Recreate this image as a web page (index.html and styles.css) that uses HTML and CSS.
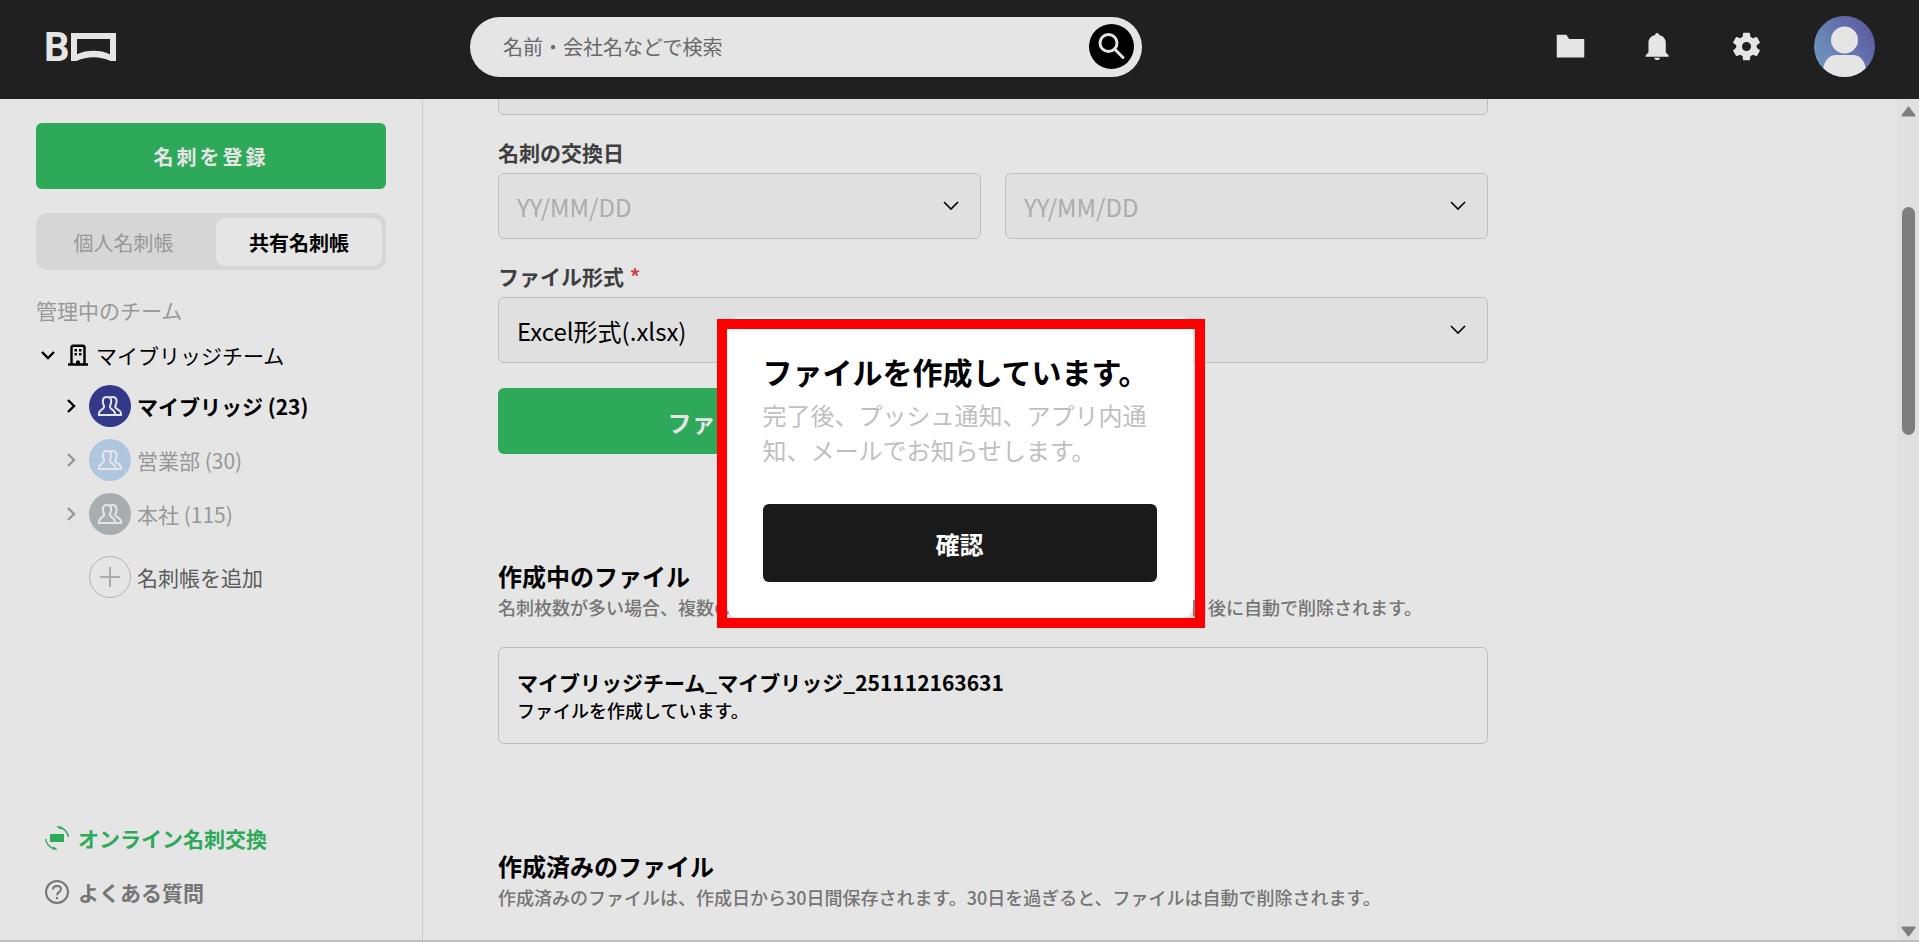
FILE: index.html
```html
<!DOCTYPE html>
<html lang="ja">
<head>
    <meta charset="UTF-8">
    <meta name="viewport" content="width=device-width, initial-scale=1.0">
    <title>マイブリッジ</title>
    <link rel="stylesheet" href="styles.css">
</head>
<body>
    <!-- shared icon shapes -->
    <svg class="symbols" aria-hidden="true">
        <symbol id="icon-people" viewBox="0 0 24 20">
            <path d="M1 19v-1.500c0-1.200.7-2 1.700-2.900l2.600-2.400c1.100-1 1.200-1.800.5-3C5 8 4.800 6.600 4.800 5.200 4.800 2.500 6.600 1 9 1s4.200 1.500 4.200 4.200c0 1.400-.2 2.800-1 4-.7 1.200-.6 2 .5 3l2.600 2.400c1 .9 1.700 1.700 1.700 2.900V19z"/>
            <path d="M11.500 1.700C12.300 1.200 13.200 1 14.200 1c2.500 0 4.400 1.500 4.400 4.200 0 1.400-.3 2.800-1 4-.8 1.200-.6 2 .5 3l3.200 2.400c1.100.9 1.700 1.700 1.700 2.900V19h-6"/>
        </symbol>
        <symbol id="icon-chevron" viewBox="0 0 14 14">
            <path d="M4 1L10 7 4 13"/>
        </symbol>
    </svg>

    <header class="header">
        <a class="logo" href="#" aria-label="ホーム">
            <svg width="72" height="56" viewBox="0 -12 72 56">
                <text class="logo-letter" x="-1" y="30">B</text>
                <path d="M26 2h45v28h-5.500c-11-5-23-5-34 0H26zM32 8v15.200c10-4.500 23-4.500 33 0V8z" fill="#fff" fill-rule="evenodd"/>
            </svg>
        </a>
        <form class="search" role="search">
            <input type="search" class="search-input" placeholder="名前・会社名などで検索" aria-label="名前・会社名などで検索">
            <button type="button" class="search-btn" aria-label="検索">
                <svg width="28" height="28" viewBox="0 0 28 28" fill="none" stroke="#fff" stroke-width="3" stroke-linecap="round">
                    <circle cx="10.500" cy="10" r="8.500"/>
                    <path d="M17 16.500l8 8"/>
                </svg>
            </button>
        </form>
        <nav class="header-menu">
            <a href="#" aria-label="フォルダ">
                <svg width="33" height="33" viewBox="0 0 24 24" fill="#fff"><path d="M2 3.500h7l2 3h11v13.500H2z"/></svg>
            </a>
            <a href="#" aria-label="お知らせ">
                <svg width="33" height="33" viewBox="0 0 24 24" fill="#fff"><path d="M11 2.200c-.8 0-1.400.6-1.500 1.400C6.500 4.200 4.700 6.500 4.700 9.300v7l-2 2V19.500h16.600v-1.200l-2-2v-7c0-2.800-1.800-5.100-4.800-5.700-.1-.8-.7-1.400-1.500-1.400zM8.800 20.200c.2 1 1.100 1.700 2.200 1.700s2-.7 2.200-1.700z"/></svg>
            </a>
            <a href="#" aria-label="設定">
                <svg width="33" height="33" viewBox="0 0 24 24" fill="#fff"><path d="M19.430 12.980c.04-.32.070-.64.070-.98s-.03-.66-.07-.98l2.110-1.650c.19-.15.240-.42.120-.64l-2-3.460c-.12-.22-.39-.3-.61-.22l-2.490 1c-.52-.4-1.080-.73-1.690-.98l-.38-2.650A.488.488 0 0 0 14 2h-4c-.25 0-.46.180-.49.420l-.38 2.650c-.61.250-1.170.590-1.690.980l-2.490-1c-.23-.09-.49 0-.61.220l-2 3.460c-.13.220-.07.490.120.640l2.110 1.650c-.04.320-.07.650-.07.980s.030.660.070.980l-2.110 1.650c-.19.150-.24.420-.12.640l2 3.460c.12.220.390.300.61.220l2.490-1c.52.400 1.080.730 1.690.980l.38 2.650c.03.240.240.420.49.420h4c.25 0 .46-.18.490-.42l.38-2.650c.61-.25 1.170-.59 1.690-.98l2.490 1c.23.090.490 0 .61-.22l2-3.460c.12-.22.070-.49-.12-.64zM12 15.300a3.300 3.300 0 1 1 0-6.600 3.300 3.300 0 0 1 0 6.600z"/></svg>
            </a>
            <a class="avatar" href="#" aria-label="プロフィール">
                <svg width="61" height="61" viewBox="0 0 61 61">
                    <defs>
                        <linearGradient id="avatar-bg" x1="0" y1="0.800" x2="0.900" y2="0.100">
                            <stop offset="0" stop-color="#7cabd6"/>
                            <stop offset="1" stop-color="#6864b4"/>
                        </linearGradient>
                        <clipPath id="avatar-clip"><circle cx="30.500" cy="30.500" r="30.500"/></clipPath>
                    </defs>
                    <g clip-path="url(#avatar-clip)">
                        <rect width="61" height="61" fill="url(#avatar-bg)"/>
                        <circle cx="30.500" cy="24" r="13.500" fill="#fff"/>
                        <path d="M9 54c1-9 6-15 13-15h17c7 0 12 6 13 15v8H9z" fill="#fff"/>
                    </g>
                </svg>
            </a>
        </nav>
    </header>

    <div class="layout">
        <aside class="sidebar">
            <button type="button" class="register-btn">名刺を登録</button>
            <div class="tabs">
                <button type="button" class="tab">個人名刺帳</button>
                <button type="button" class="tab active">共有名刺帳</button>
            </div>

            <p class="team-title">管理中のチーム</p>
            <a class="team" href="#">
                <svg class="chevron down" width="14" height="14"><use href="#icon-chevron"/></svg>
                <svg width="20" height="22" viewBox="0 0 20 22">
                    <path d="M3.500 20V3.500c0-1.200.6-1.800 1.800-1.800h9.400c1.200 0 1.800.6 1.800 1.800V20M0 20.500h20" fill="none" stroke="#000" stroke-width="2.400"/>
                    <path d="M6.500 5h2.500v2.500H6.500zM11 5h2.500v2.500H11zM6.500 9h2.500v2.500H6.500zM11 9h2.500v2.500H11zM8 20v-2.500l2-1.500 2 1.500V20z"/>
                </svg>
                <span>マイブリッジチーム</span>
            </a>
            <ul class="books">
                <li>
                    <a class="book active" href="#">
                        <svg class="chevron" width="14" height="14"><use href="#icon-chevron"/></svg>
                        <span class="book-icon navy"><svg width="24" height="20"><use href="#icon-people"/></svg></span>
                        <span>マイブリッジ (23)</span>
                    </a>
                </li>
                <li>
                    <a class="book" href="#">
                        <svg class="chevron" width="14" height="14"><use href="#icon-chevron"/></svg>
                        <span class="book-icon blue"><svg width="24" height="20"><use href="#icon-people"/></svg></span>
                        <span>営業部 (30)</span>
                    </a>
                </li>
                <li>
                    <a class="book" href="#">
                        <svg class="chevron" width="14" height="14"><use href="#icon-chevron"/></svg>
                        <span class="book-icon gray"><svg width="24" height="20"><use href="#icon-people"/></svg></span>
                        <span>本社 (115)</span>
                    </a>
                </li>
            </ul>
            <button type="button" class="add-book">
                <span class="add-icon"><svg width="20" height="20" viewBox="0 0 20 20"><path d="M10 0v20M0 10h20" stroke="#c0c0c0" stroke-width="2"/></svg></span>
                <span>名刺帳を追加</span>
            </button>

            <div class="side-links">
                <a class="green" href="#">
                    <svg width="24" height="24" viewBox="0 0 24 24">
                        <path d="M5 8h14v8H5z" fill="#33bd64"/>
                        <path d="M15 1.500C19.500 2.500 23 6.500 23.300 11M9 22.500C4.500 21.500 1 17.500.7 13" fill="none" stroke="#33bd64" stroke-width="1.400"/>
                        <path d="M11.500 0l6 .8-2.500 2.700zM12.500 24l-6-.8L9 20.500z" fill="#33bd64"/>
                    </svg>
                    <span>オンライン名刺交換</span>
                </a>
                <a href="#">
                    <svg width="24" height="24" viewBox="0 0 24 24" fill="none" stroke="#838383" stroke-width="2">
                        <circle cx="12" cy="12" r="11"/>
                        <path d="M8 9.500C8 7.200 9.700 6 12 6s4 1.200 4 3.300c0 2.700-4 3-4 6"/>
                        <path d="M12 17v2.200"/>
                    </svg>
                    <span>よくある質問</span>
                </a>
            </div>
        </aside>

        <main class="main">
            <div class="content">
                <form>
                    <input type="text" class="field" aria-label="名刺帳">

                    <label class="label" for="date-from">名刺の交換日</label>
                    <div class="field-row">
                        <select class="field empty" id="date-from"><option>YY/MM/DD</option></select>
                        <select class="field empty" aria-label="名刺の交換日(終了)"><option>YY/MM/DD</option></select>
                    </div>

                    <label class="label" for="file-type">ファイル形式 <span class="required">*</span></label>
                    <select class="field" id="file-type"><option>Excel形式(.xlsx)</option></select>

                    <div class="field-row submit-row">
                        <button type="button" class="create-btn">ファイル作成</button>
                    </div>
                </form>

                <section class="files">
                    <h2>作成中のファイル</h2>
                    <p class="note">名刺枚数が多い場合、複数のファイルに分割します。ファイルの作成が完了してから7日後に自動で削除されます。</p>
                    <div class="file">
                        <h3>マイブリッジチーム_マイブリッジ_251112163631</h3>
                        <p>ファイルを作成しています。</p>
                    </div>
                </section>

                <section class="files">
                    <h2>作成済みのファイル</h2>
                    <p class="note">作成済みのファイルは、作成日から30日間保存されます。30日を過ぎると、ファイルは自動で削除されます。</p>
                </section>
            </div>
        </main>

        <div class="scrollbar" aria-hidden="true">
            <svg width="15" height="11" viewBox="0 0 15 11"><path d="M7.500 1.500L13.500 9.500H1.500z"/></svg>
            <div class="track-before"></div>
            <div class="thumb"></div>
            <div class="track-after"></div>
            <svg width="15" height="11" viewBox="0 0 15 11"><path d="M7.500 9.500L1.500 1.500h12z"/></svg>
        </div>
    </div>

    <!-- Modal -->
    <div class="overlay">
        <div class="modal" role="dialog" aria-modal="true" aria-labelledby="modal-title">
            <h2 id="modal-title">ファイルを作成しています。</h2>
            <p>完了後、プッシュ通知、アプリ内通知、メールでお知らせします。</p>
            <button type="button" class="confirm-btn">確認</button>
        </div>
    </div>
</body>
</html>
```

FILE: styles.css
```css
* {
    box-sizing: border-box;
}
body {
    display: flex;
    flex-direction: column;
    height: 100vh;
    margin: 0;
    overflow: hidden;
    font-family: "Noto Sans CJK JP", sans-serif;
    font-size: 21px;
    line-height: 30px;
    color: #000;
    background-color: #fff;
}
h2, h3, p, ul {
    margin: 0;
    padding: 0;
}
ul {
    list-style: none;
}
a {
    color: inherit;
    text-decoration: none;
}
button, input, select {
    font-family: inherit;
    font-size: inherit;
}
button {
    padding: 0;
    border: none;
    cursor: pointer;
}
svg {
    display: block;
    flex-shrink: 0;
}
.symbols {
    position: absolute;
    width: 0;
    height: 0;
}
/* header */
.header {
    display: grid;
    grid-template-columns: 470px minmax(0, 672px) 1fr;
    align-items: center;
    flex-shrink: 0;
    height: 99px;
    padding: 0 44px 6px 0;
    background-color: #242424;
}
.logo {
    margin-left: 45px;
}
.logo svg {
    overflow: visible;
}
.logo-letter {
    font-family: Roboto, sans-serif;
    font-size: 40px;
    font-weight: bold;
    fill: #fff;
}
.search {
    display: flex;
    align-items: center;
    height: 60px;
    padding: 0 8px 0 33px;
    border-radius: 30px;
    background-color: #fff;
}
.search-input {
    flex: 1;
    min-width: 0;
    padding: 0;
    border: none;
    outline: none;
    background: none;
    font-size: 20px;
}
.search-input::placeholder {
    color: #757575;
}
.search-btn {
    display: flex;
    align-items: center;
    justify-content: center;
    width: 45px;
    height: 45px;
    border-radius: 50%;
    background-color: #000;
}
.header-menu {
    display: flex;
    align-items: center;
    justify-content: flex-end;
    gap: 55px;
}
.avatar {
    margin-left: -4px;
}
/* layout */
.layout {
    display: flex;
    flex: 1;
    min-height: 0;
    border-bottom: 2px solid #d4d4d4;
}
.sidebar {
    display: flex;
    flex-direction: column;
    flex: 0 0 423px;
    padding: 24px 36px;
    border-right: 1px solid #e4e4e4;
}
.register-btn {
    height: 66px;
    flex-shrink: 0;
    border-radius: 6px;
    background-color: #33bd64;
    color: #fff;
    font-size: 20px;
    font-weight: bold;
    letter-spacing: 3px;
}
.tabs {
    display: grid;
    grid-template-columns: 1fr 166px;
    gap: 9px;
    flex-shrink: 0;
    height: 57px;
    margin-top: 24px;
    padding: 5px 4px 4px;
    border-radius: 12px;
    background-color: #efefef;
}
.tab {
    border-radius: 9px;
    background: none;
    color: #aaa;
    font-size: 20px;
}
.tab.active {
    background-color: #fff;
    color: #000;
    font-weight: bold;
}
.team-title {
    margin-top: 25px;
    color: #aaa;
}
.team {
    display: flex;
    align-items: center;
    margin: 15px 0 9px 5px;
}
.team span {
    margin-left: 8px;
}
.chevron {
    margin-right: 13px;
    fill: none;
    stroke: currentColor;
    stroke-width: 2.4;
}
.chevron.down {
    transform: rotate(90deg);
}
.book {
    display: flex;
    align-items: center;
    height: 54px;
    padding-left: 28px;
    color: #aaa;
}
.book .chevron {
    margin-right: 11px;
}
.book.active {
    color: #000;
    font-weight: bold;
}
.book-icon, .add-icon {
    display: flex;
    align-items: center;
    justify-content: center;
    width: 42px;
    height: 42px;
    margin-right: 6px;
    border-radius: 50%;
}
.book-icon svg {
    fill: none;
    stroke: #fff;
    stroke-width: 2;
}
.navy {
    background-color: #393f98;
}
.blue {
    background-color: #c4ddf9;
}
.gray {
    background-color: #bdc1c5;
}
.add-book {
    display: flex;
    align-items: center;
    margin: 15px 0 0 53px;
    background: none;
    color: #666;
}
.add-icon {
    border: 1px solid #c8c8c8;
}
.side-links {
    margin-top: auto;
}
.side-links a {
    display: flex;
    align-items: center;
    gap: 9px;
    margin-left: 9px;
    color: #838383;
    font-weight: bold;
}
.side-links a + a {
    margin-top: 24px;
    margin-bottom: 9px;
}
.side-links .green {
    color: #33bd64;
}
/* main */
.main {
    flex: 1;
    min-width: 0;
    padding: 0 75px;
    overflow: hidden;
}
/* scrolled part of the form stays above the top edge */
.content {
    max-width: 990px;
    margin-top: -50px;
}
.field {
    display: block;
    width: 100%;
    height: 66px;
    padding: 0 18px;
    border: 1px solid #d4d4d4;
    border-radius: 6px;
    background-color: #fafafa;
    color: #000;
    font-size: 24px;
}
select.field {
    appearance: none;
    background-image: url("data:image/svg+xml,%3Csvg xmlns='http://www.w3.org/2000/svg' width='16' height='10' viewBox='0 0 16 10'%3E%3Cpath d='M1 1l7 7 7-7' fill='none' stroke='%23000' stroke-width='1.600'/%3E%3C/svg%3E");
    background-repeat: no-repeat;
    background-position: right 21px center;
}
select.empty {
    color: #c0c0c0;
}
.label {
    display: block;
    margin: 22px 0 6px;
    color: #474747;
    font-weight: bold;
}
.required {
    margin-left: 1px;
    color: #e65050;
}
.field-row {
    display: grid;
    grid-template-columns: 1fr 1fr;
    gap: 24px;
}
.submit-row {
    margin-top: 25px;
}
.create-btn {
    height: 66px;
    border-radius: 6px;
    background-color: #33bd64;
    color: #fff;
    font-size: 24px;
    font-weight: bold;
}
.files {
    margin-top: 104px;
}
.files h2 {
    font-size: 24px;
    line-height: 36px;
}
.note {
    color: #838383;
    font-size: 18px;
    font-weight: 500;
    line-height: 27px;
}
.file {
    margin-top: 26px;
    padding: 19px 18px;
    border: 1px solid #d4d4d4;
    border-radius: 6px;
}
.file h3 {
    font-size: 21px;
    line-height: 30px;
}
.file p {
    font-size: 18px;
    font-weight: 500;
    line-height: 27px;
}
.scrollbar {
    display: flex;
    flex-direction: column;
    align-items: center;
    width: 22px;
    padding: 7px 0 3px;
    background-color: #fafafa;
    fill: #8d8d8d;
}
.scrollbar svg path {
    stroke: #8d8d8d;
    stroke-width: 2;
    stroke-linejoin: round;
}
.track-before {
    flex: 90;
}
.thumb {
    flex: 227;
    width: 13px;
    border-radius: 7px;
    background-color: #8d8d8d;
}
.track-after {
    flex: 489;
}
/* modal */
.overlay {
    position: fixed;
    inset: 0;
    display: flex;
    align-items: center;
    justify-content: center;
    padding-bottom: 7px;
    background-color: rgba(0, 0, 0, 0.1);
}
.modal {
    position: relative;
    width: 466px;
    padding: 34px 36px 36px;
    border-radius: 12px;
    background-color: #fff;
}
.modal::after {
    content: "";
    position: absolute;
    inset: 2px -12px -10px -10px;
    border: 10px solid #f00;
    pointer-events: none;
}
.modal h2 {
    font-size: 30px;
    line-height: 40px;
}
.modal p {
    margin: 6px 0 37px;
    color: #bfbfbf;
    font-size: 24px;
    line-height: 35px;
}
.confirm-btn {
    width: 100%;
    height: 78px;
    border-radius: 6px;
    background-color: #1a1a1a;
    color: #fff;
    font-size: 24px;
    font-weight: bold;
}
```
